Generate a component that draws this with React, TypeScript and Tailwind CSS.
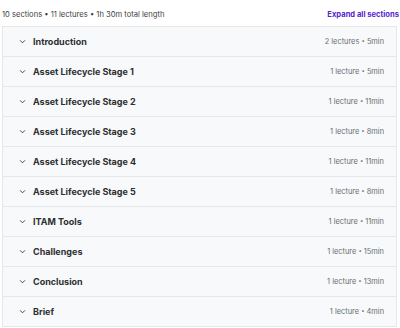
import React from "react";

const sections = [
  ["Introduction", "2 lectures", "5min"],
  ["Asset Lifecycle Stage 1", "1 lecture", "5min"],
  ["Asset Lifecycle Stage 2", "1 lecture", "11min"],
  ["Asset Lifecycle Stage 3", "1 lecture", "8min"],
  ["Asset Lifecycle Stage 4", "1 lecture", "11min"],
  ["Asset Lifecycle Stage 5", "1 lecture", "8min"],
  ["ITAM Tools", "1 lecture", "11min"],
  ["Challenges", "1 lecture", "15min"],
  ["Conclusion", "1 lecture", "13min"],
  ["Brief", "1 lecture", "4min"],
];

function Chevron() {
  return (
    <svg width="7" height="7" viewBox="0 0 8 8" fill="none" className="shrink-0">
      <path d="M1.5 3 L4 5.5 L6.5 3" stroke="#2d2f31" strokeWidth="1" strokeLinecap="round" strokeLinejoin="round" />
    </svg>
  );
}

export default function App() {
  return (
    <div className="w-[400px] h-[328px] bg-white overflow-hidden" style={{ fontFamily: "Inter, 'Noto Sans', sans-serif" }}>
      <div className="flex items-center justify-between h-[26px] pl-[2px] pr-[1px] pt-[3px]">
        <span className="text-[7.6px] text-[#3e4143]">10 sections • 11 lectures • 1h 30m total length</span>
        <span className="text-[7.6px] font-bold text-[#5624d0]">Expand all sections</span>
      </div>
      <div className="ml-[2px] mr-[3px] border border-[#e4e8eb]">
        {sections.map(([title, lec, dur], i) => (
          <div
            key={i}
            className={`flex items-center bg-[#f7f9fa] pl-[16px] pr-[12px] ${i > 0 ? "h-[30px] border-t border-[#e4e8eb]" : "h-[29px]"}`}
          >
            <Chevron />
            <span className="ml-[7px] text-[9px] font-bold text-[#2d2f31] flex-1">{title}</span>
            <span className="text-[7.4px] text-[#6a6f73]">
              {lec} <span className="text-[6px] align-[1px]">•</span> {dur}
            </span>
          </div>
        ))}
      </div>
    </div>
  );
}
